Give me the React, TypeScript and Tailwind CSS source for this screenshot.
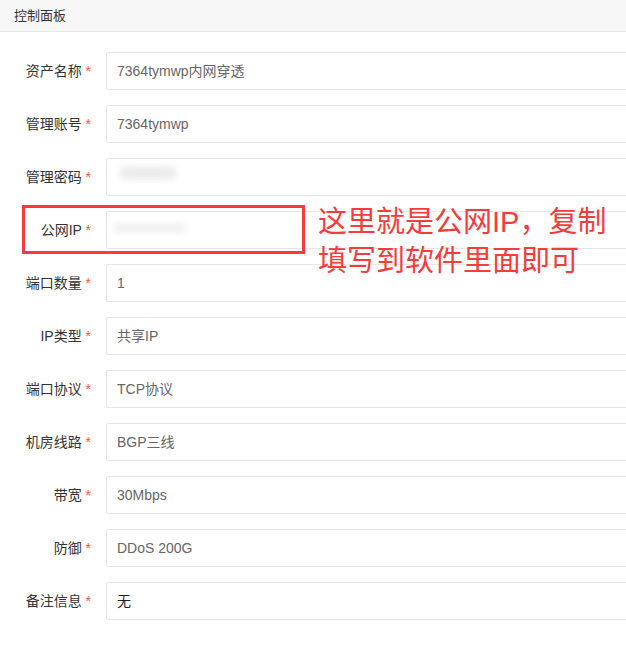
import React from "react";

const font = {
  fontFamily: '"Liberation Sans", "Noto Sans CJK SC", sans-serif',
};

type Field = { label: string; value?: string; blur?: "pwd" | "ip"; dark?: boolean };

const fields: Field[] = [
  { label: "资产名称", value: "7364tymwp内网穿透" },
  { label: "管理账号", value: "7364tymwp" },
  { label: "管理密码", blur: "pwd" },
  { label: "公网IP", blur: "ip" },
  { label: "端口数量", value: "1" },
  { label: "IP类型", value: "共享IP" },
  { label: "端口协议", value: "TCP协议" },
  { label: "机房线路", value: "BGP三线" },
  { label: "带宽", value: "30Mbps" },
  { label: "防御", value: "DDoS 200G" },
  { label: "备注信息", value: "无", dark: true },
];

function Row({ f }: { f: Field }) {
  return (
    <div className="flex items-center h-[38px]">
      <div className="w-[92px] shrink-0 text-right text-[14px] text-[#333] pr-[1px]">
        {f.label} <span className="text-[#ff5722]">*</span>
      </div>
      <div className="ml-[14px] w-[560px] shrink-0 h-[38px] border border-[#e6e6e6] rounded-[2px] bg-white flex items-center pl-[10px] relative">
        {f.value && (
          <span className={f.dark ? "text-[14px] text-[#222]" : "text-[14px] text-[#666]"}>
            {f.value}
          </span>
        )}
        {f.blur === "pwd" && (
          <div className="absolute left-[12px] top-[7px] w-[58px] h-[14px] rounded-full bg-[#ececec] blur-[3px]" />
        )}
        {f.blur === "ip" && (
          <div className="absolute left-[6px] top-[12px] w-[72px] h-[8px] rounded-full bg-[#eeeeee] blur-[3px]" />
        )}
      </div>
    </div>
  );
}

export default function App() {
  return (
    <div className="w-[626px] h-[648px] bg-white overflow-hidden relative" style={font}>
      <div className="h-[32px] bg-[#f7f7f7] border-b border-[#e8e8e8] flex items-center pl-[14px] text-[13px] text-[#333]">
        控制面板
      </div>
      <div className="pt-[20px] flex flex-col gap-[15px]">
        {fields.map((f) => (
          <Row key={f.label} f={f} />
        ))}
      </div>

      <div className="absolute left-[22px] top-[205px] w-[283px] h-[49px] border-[3px] border-[#f53b3b]" />
      <div className="absolute left-[318px] top-[203px] text-[29px] leading-[39px] text-[#f53b3b] whitespace-nowrap">
        <div>这里就是公网IP，复制</div>
        <div>填写到软件里面即可</div>
      </div>
    </div>
  );
}
